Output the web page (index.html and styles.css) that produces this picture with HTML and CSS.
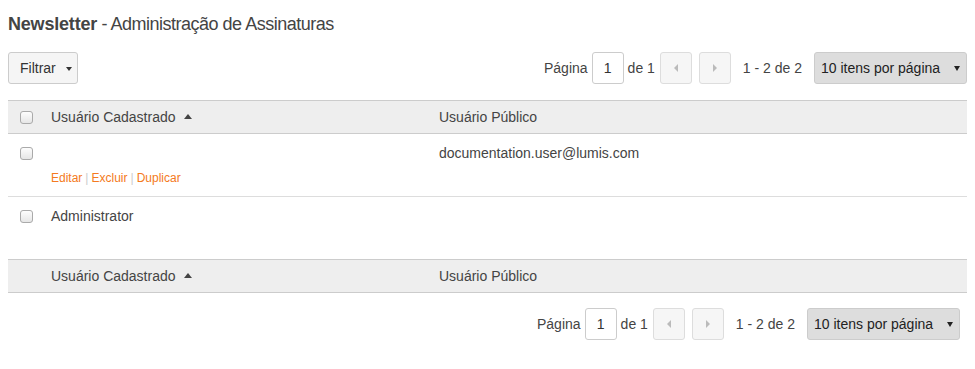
FILE: index.html
```html
<!DOCTYPE html>
<html lang="pt-br">
<head>
  <meta charset="UTF-8">
  <meta name="viewport" content="width=device-width, initial-scale=1.0">
  <title>Newsletter - Administração de Assinaturas</title>
  <link rel="stylesheet" href="styles.css">
</head>
<body>
  <h1 class="titulo"><strong>Newsletter</strong><span class="subtitulo"> - Administração de Assinaturas</span></h1>

  <div class="barra">
    <button class="btn-filtrar">Filtrar <span class="seta-baixo"></span></button>
    <div class="paginacao">
      <span>Página</span>
      <input class="pagina-atual" type="text" value="1">
      <span>de 1</span>
      <button class="btn-nav"><span class="seta-esq"></span></button>
      <button class="btn-nav proximo"><span class="seta-dir"></span></button>
      <span class="contagem">1 - 2 de 2</span>
      <div class="itens-pagina">10 itens por página <span class="seta-select"></span></div>
    </div>
  </div>

  <table class="grade">
    <colgroup>
      <col class="col-check">
      <col class="col-cadastrado">
      <col>
    </colgroup>
    <thead>
      <tr>
        <th><input type="checkbox" class="marcar"></th>
        <th>Usuário Cadastrado <span class="seta-sort"></span></th>
        <th>Usuário Público</th>
      </tr>
    </thead>
    <tbody>
      <tr>
        <td><input type="checkbox" class="marcar"></td>
        <td>
          <div class="nome"></div>
          <div class="acoes"><a href="#">Editar</a><span class="sep">|</span><a href="#">Excluir</a><span class="sep">|</span><a href="#">Duplicar</a></div>
        </td>
        <td>documentation.user@lumis.com</td>
      </tr>
      <tr>
        <td><input type="checkbox" class="marcar"></td>
        <td>Administrator</td>
        <td></td>
      </tr>
    </tbody>
    <tfoot>
      <tr>
        <th></th>
        <th>Usuário Cadastrado <span class="seta-sort"></span></th>
        <th>Usuário Público</th>
      </tr>
    </tfoot>
  </table>

  <div class="barra rodape">
    <div class="paginacao">
      <span>Página</span>
      <input class="pagina-atual" type="text" value="1">
      <span>de 1</span>
      <button class="btn-nav"><span class="seta-esq"></span></button>
      <button class="btn-nav proximo"><span class="seta-dir"></span></button>
      <span class="contagem">1 - 2 de 2</span>
      <div class="itens-pagina">10 itens por página <span class="seta-select"></span></div>
    </div>
  </div>
</body>
</html>
```

FILE: styles.css
```css
body {
  margin: 0 8px;
  padding-top: 14px;
  font-family: "Liberation Sans", Arial, sans-serif;
  font-size: 14px;
  color: #444;
  background: #fff;
}

.titulo {
  margin: 0 0 18px;
  font-size: 18px;
  line-height: 20px;
  font-weight: normal;
  color: #444;
  letter-spacing: -0.2px;
}

.titulo strong {
  font-weight: bold;
}

.subtitulo {
  letter-spacing: -0.5px;
}

.barra {
  display: flex;
  align-items: center;
  justify-content: space-between;
  height: 32px;
}

.btn-filtrar {
  height: 32px;
  width: 70px;
  padding: 0 0 0 11px;
  text-align: left;
  font-family: inherit;
  font-size: 14px;
  color: #333;
  background: #f5f5f5;
  border: 1px solid #ccc;
  border-radius: 3px;
}

.seta-baixo {
  display: inline-block;
  margin-left: 6px;
  vertical-align: middle;
  border-left: 3px solid transparent;
  border-right: 3px solid transparent;
  border-top: 4px solid #333;
}

.paginacao {
  display: flex;
  align-items: center;
  color: #444;
}

.pagina-atual {
  box-sizing: border-box;
  width: 32px;
  height: 32px;
  margin: 0 4px;
  padding: 0;
  text-align: center;
  font-family: inherit;
  font-size: 14px;
  color: #333;
  border: 1px solid #ccc;
  border-radius: 3px;
}

.btn-nav {
  box-sizing: border-box;
  width: 32px;
  height: 32px;
  margin-left: 5px;
  padding: 0;
  background: #f6f6f6;
  border: 1px solid #ddd;
  border-radius: 3px;
  display: flex;
  align-items: center;
  justify-content: center;
}

.btn-nav.proximo {
  margin-left: 7px;
}

.seta-esq {
  border-top: 4px solid transparent;
  border-bottom: 4px solid transparent;
  border-right: 4px solid #bbb;
}

.seta-dir {
  border-top: 4px solid transparent;
  border-bottom: 4px solid transparent;
  border-left: 4px solid #bbb;
}

.contagem {
  margin: 0 12px;
}

.itens-pagina {
  box-sizing: border-box;
  position: relative;
  width: 153px;
  height: 32px;
  line-height: 30px;
  padding-left: 6px;
  color: #222;
  background: #ddd;
  border: 1px solid #ccc;
  border-radius: 3px;
}

.seta-select {
  position: absolute;
  right: 6px;
  top: 13px;
  border-left: 3px solid transparent;
  border-right: 3px solid transparent;
  border-top: 5px solid #222;
}

.grade {
  width: 100%;
  margin-top: 16px;
  border-collapse: collapse;
  table-layout: fixed;
}

.col-check {
  width: 31px;
}

.col-cadastrado {
  width: 388px;
}

.grade th {
  height: 32px;
  padding: 0 0 0 12px;
  text-align: left;
  font-weight: normal;
  line-height: 20px;
  color: #444;
  background: #eee;
  border-top: 1px solid #ccc;
  border-bottom: 1px solid #ccc;
  vertical-align: middle;
}

.grade td {
  height: 53px;
  padding: 9px 0 0 12px;
  line-height: 20px;
  vertical-align: top;
  color: #444;
  border-bottom: 1px solid #ddd;
}

.grade tbody tr:last-child td {
  border-bottom: none;
}

.marcar {
  appearance: none;
  box-sizing: border-box;
  width: 13px;
  height: 13px;
  margin: 0;
  vertical-align: middle;
  position: relative;
  top: -1px;
  border: 1px solid #aaa;
  border-radius: 3px;
  background: linear-gradient(#fdfdfd, #e6e6e6);
}

.seta-sort {
  display: inline-block;
  margin-left: 5px;
  vertical-align: middle;
  position: relative;
  top: -2px;
  border-left: 4px solid transparent;
  border-right: 4px solid transparent;
  border-bottom: 5px solid #444;
}

.nome {
  height: 20px;
}

.acoes {
  margin-top: 7px;
  font-size: 12px;
  line-height: 16px;
}

.acoes a {
  color: #f47a21;
  text-decoration: none;
}

.sep {
  margin: 0 3px;
  color: #ccc;
}

.rodape {
  justify-content: flex-end;
  margin-top: 15px;
  margin-right: 7px;
}
```
